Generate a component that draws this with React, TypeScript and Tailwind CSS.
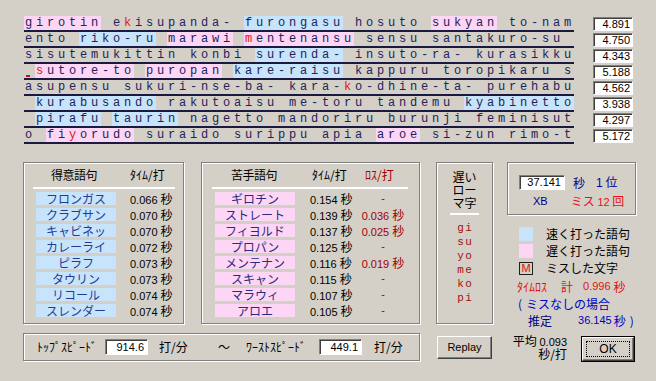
import React from "react"

type Hl = [number, number, "b" | "p"]

interface Line {
  t: string
  hl: Hl[]
  red: number[]
  under?: number
  n: string
}

const LINES: Line[] = [
  { t: "girotin ekisupanda- furongasu hosuto sukyan to-nam", hl: [[0, 7, "p"], [20, 9, "b"], [37, 6, "p"]], red: [9], n: "4.891" },
  { t: "ento riko-ru marawi mentenansu sensu santakuro-su ", hl: [[5, 7, "b"], [13, 6, "p"], [20, 10, "p"]], red: [20], n: "4.750" },
  { t: "sisutemukittin konbi surenda- insuto-ra- kurasikku", hl: [[21, 8, "b"]], red: [], n: "4.343" },
  { t: " sutore-to puropan kare-raisu kappuru toropikaru s", hl: [[1, 9, "p"], [11, 7, "p"], [19, 10, "b"]], red: [1], under: 0, n: "5.188" },
  { t: "asupensu sukuri-nse-ba- kara-ko-dhine-ta- purehabu", hl: [], red: [29], n: "4.562" },
  { t: " kurabusando rakutoaisu me-toru tandemu kyabinetto", hl: [[1, 11, "b"], [40, 10, "b"]], red: [], n: "3.938" },
  { t: " pirafu taurin nagetto mandoriru burunji feminisut", hl: [[1, 6, "b"], [8, 6, "b"]], red: [], n: "4.297" },
  { t: "o fiyorudo suraido surippu apia aroe si-zun rimo-t", hl: [[2, 8, "p"], [32, 4, "p"]], red: [4], n: "5.172" },
]

const FAST = [
  ["フロンガス", "0.066"],
  ["クラブサン", "0.070"],
  ["キャビネッ", "0.070"],
  ["カレーライ", "0.072"],
  ["ピラフ", "0.073"],
  ["タウリン", "0.073"],
  ["リコール", "0.074"],
  ["スレンダー", "0.074"],
]

const SLOW = [
  ["ギロチン", "0.154", ""],
  ["ストレート", "0.139", "0.036"],
  ["フィヨルド", "0.137", "0.025"],
  ["プロパン", "0.125", ""],
  ["メンテナン", "0.116", "0.019"],
  ["スキャン", "0.115", ""],
  ["マラウィ", "0.107", ""],
  ["アロエ", "0.105", ""],
]

const SLOW_KANA = ["gi", "su", "yo", "me", "ko", "pi"]

const jp = "font-['Noto_Sans_CJK_JP',sans-serif]"
const num = "font-['Liberation_Sans','Noto_Sans_CJK_JP',sans-serif]"
const etched = "border border-[#808080] shadow-[inset_1px_1px_0_#ffffff,1px_1px_0_#ffffff]"
const sunken = "border border-t-[#808080] border-l-[#808080] border-r-white border-b-white shadow-[inset_1px_1px_0_#404040] bg-white"

function cellBg(line: Line, i: number) {
  for (const [s, len, c] of line.hl) {
    if (i >= s && i < s + len) return c === "b" ? "bg-[#c8e4fb]" : "bg-[#fcd6f4]"
  }
  return ""
}

function RomajiLine({ line }: { line: Line }) {
  return (
    <div className="flex items-start h-[16px]">
      <div className="w-[550px] flex flex-col">
        <div className="flex h-[14px]">
          {line.t.split("").map((ch, i) => (
            <span
              key={i}
              className={`relative w-[11px] h-[14px] leading-[14px] pl-[1px] text-[12px] ${cellBg(line, i)} ${line.red.includes(i) ? "text-[#e01818]" : "text-[#22225a]"}`}
            >
              {ch === " " ? "\u00a0" : ch}
              {line.under === i && <span className="absolute left-[2px] bottom-[1px] w-[4px] h-[2px] bg-[#d01010]" />}
            </span>
          ))}
        </div>
        <div className="h-[2px] bg-[#1a1a40]" />
      </div>
      <div className={`ml-[19px] mt-[1px] w-[40px] h-[14px] ${sunken} text-right pr-[2px] text-[11px] leading-[12px] text-black ${num}`}>
        {line.n}
      </div>
    </div>
  )
}

function FastPanel() {
  return (
    <div className={`w-[161px] h-[162px] ${etched}`}>
      <div className={`flex h-[24px] items-center text-[12px] text-black ${jp}`}>
        <span className="w-[100px] text-center tracking-[-0.5px]">得意語句</span>
        <span className="ml-[6px] text-[12px]">ﾀｲﾑ/打</span>
      </div>
      <div className="ml-[9px] w-[142px] h-[2px] bg-white" />
      <div className="mt-[3px] flex flex-col">
        {FAST.map(([w, t]) => (
          <div key={w} className="flex h-[16px] items-start">
            <div className={`ml-[12px] w-[80px] h-[13px] bg-[#c8e4fb] text-center leading-[13px] text-[12px] text-[#1e3c96] ${jp}`}>{w}</div>
            <div className={`ml-[14px] whitespace-nowrap leading-[13px] text-[11px] text-black ${num}`}>
              {t} <span className={`text-[12px] ${jp}`}>秒</span>
            </div>
          </div>
        ))}
      </div>
    </div>
  )
}

function SlowPanel() {
  return (
    <div className={`w-[219px] h-[162px] ${etched}`}>
      <div className={`flex h-[24px] items-center text-[12px] text-black ${jp}`}>
        <span className="w-[104px] text-center tracking-[-0.5px]">苦手語句</span>
        <span className="ml-[6px] w-[53px]">ﾀｲﾑ/打</span>
        <span className="text-[#a00000]">ﾛｽ/打</span>
      </div>
      <div className="ml-[10px] w-[196px] h-[2px] bg-white" />
      <div className="mt-[3px] flex flex-col">
        {SLOW.map(([w, t, l]) => (
          <div key={w} className="flex h-[16px] items-start">
            <div className={`ml-[13px] w-[80px] h-[13px] bg-[#fcd6f4] text-center leading-[13px] text-[12px] text-[#2a2a80] ${jp}`}>{w}</div>
            <div className={`ml-[15px] w-[49px] whitespace-nowrap leading-[13px] text-[11px] text-black ${num}`}>
              {t} <span className={`text-[12px] ${jp}`}>秒</span>
            </div>
            <div className={`w-[48px] whitespace-nowrap text-center leading-[13px] text-[11px] text-[#a00000] ${num}`}>
              {l ? (
                <>
                  {l} <span className={`text-[12px] ${jp}`}>秒</span>
                </>
              ) : (
                "-"
              )}
            </div>
          </div>
        ))}
      </div>
    </div>
  )
}

function KanaPanel() {
  return (
    <div className={`w-[57px] h-[162px] ${etched} flex flex-col items-center`}>
      <div className={`pt-[7px] text-[12px] text-black text-center ${jp}`}>
        <div className="h-[13px] leading-[13px]">遅い</div>
        <div className="h-[13px] leading-[13px]">ロー</div>
        <div className="h-[13px] leading-[13px]">マ字</div>
      </div>
      <div className="mt-[4px] w-[29px] h-[2px] bg-white" />
      <div className="mt-[6px] flex flex-col items-center">
        {SLOW_KANA.map((k) => (
          <div key={k} className="h-[14px] leading-[14px] text-[11px] tracking-[1.5px] pl-[1.5px] text-[#a01010] font-['Liberation_Mono',monospace]">
            {k}
          </div>
        ))}
      </div>
    </div>
  )
}

function ScorePanel() {
  return (
    <div className={`w-[129px] h-[53px] ${etched} flex flex-col ${jp}`}>
      <div className="flex items-center mt-[12px] h-[15px]">
        <div className={`ml-[11px] w-[46px] h-[15px] ${sunken} text-right pr-[3px] text-[11px] leading-[13px] text-black ${num}`}>37.141</div>
        <span className="ml-[8px] text-[12px] text-[#000080]">秒</span>
        <span className={`ml-[11px] text-[12px] text-[#0000a0]`}>
          <span className={num}>1</span> 位
        </span>
      </div>
      <div className="flex items-center mt-[4px] h-[15px]">
        <span className={`ml-[25px] text-[11px] text-[#000080] ${num}`}>XB</span>
        <span className="ml-[23px] text-[12px] text-[#e81010]">
          ミス <span className={`text-[11px] ${num}`}>12</span> 回
        </span>
      </div>
    </div>
  )
}

function Legend() {
  return (
    <div className={`mt-[12px] flex flex-col whitespace-nowrap ${jp} text-[12px]`}>
      <div className="flex h-[17px] items-start">
        <div className="ml-[12px] w-[14px] h-[14px] bg-[#c8e4fb]" />
        <span className="ml-[13px] leading-[14px] text-black">速く打った語句</span>
      </div>
      <div className="flex h-[17px] items-start">
        <div className="ml-[12px] w-[14px] h-[14px] bg-[#fcd6f4]" />
        <span className="ml-[13px] leading-[14px] text-black">遅く打った語句</span>
      </div>
      <div className="flex h-[17px] items-start">
        <div className={`ml-[12px] mt-[1px] w-[14px] h-[13px] border border-[#202020] text-[#e01010] text-[11px] leading-[11px] text-center ${num}`}>M</div>
        <span className="ml-[13px] leading-[14px] text-black">ミスした文字</span>
      </div>
      <div className="flex h-[17px] items-center text-[#e01010]">
        <span className="ml-[10px]">ﾀｲﾑﾛｽ</span>
        <span className="ml-[14px]">計</span>
        <span className={`ml-[10px] text-[11px] ${num}`}>0.996</span>
        <span className="ml-[3px]">秒</span>
      </div>
      <div className="flex h-[17px] items-center text-[#0000c0]">
        <span className="ml-[11px]">(</span>
        <span className="ml-[4px]">ミスなしの場合</span>
      </div>
      <div className="flex h-[17px] items-center">
        <span className="ml-[21px] text-[#000080]">推定</span>
        <span className={`ml-[26px] text-[11px] text-[#0000c0] ${num}`}>36.145</span>
        <span className="ml-[2px] text-[#0000c0]">秒</span>
        <span className="ml-[4px] text-[#0000c0]">)</span>
      </div>
    </div>
  )
}

function SpeedBox() {
  return (
    <div className={`mt-[9px] h-[28px] ${etched} flex items-center pl-[13px] text-[12px] text-black whitespace-nowrap ${jp}`}>
      <span className="w-[68px]">ﾄｯﾌﾟｽﾋﾟｰﾄﾞ</span>
      <div className={`w-[43px] h-[16px] ${sunken} text-right pr-[3px] text-[11px] leading-[14px] ${num}`}>914.6</div>
      <span className="ml-[11px] w-[59px]">打/分</span>
      <span className="w-[28px]">～</span>
      <span className="w-[73px]">ﾜｰｽﾄｽﾋﾟｰﾄﾞ</span>
      <div className={`w-[43px] h-[16px] ${sunken} text-right pr-[3px] text-[11px] leading-[14px] ${num}`}>449.1</div>
      <span className="ml-[12px]">打/分</span>
    </div>
  )
}

export default function App() {
  return (
    <div className={`w-[656px] h-[381px] bg-[#d4d0c8] overflow-hidden select-none ${jp}`}>
      <div className="pt-[16px] pl-[24px] flex flex-col font-['Liberation_Mono',monospace]">
        {LINES.map((l, i) => (
          <RomajiLine key={i} line={l} />
        ))}
      </div>

      <div className="flex pl-[23px] mt-[18px]">
        <div className="flex flex-col w-[397px]">
          <div className="flex gap-[17px]">
            <FastPanel />
            <SlowPanel />
          </div>
          <SpeedBox />
        </div>

        <div className="ml-[16px] flex flex-col w-[57px]">
          <KanaPanel />
          <button className={`mt-[12px] ml-[1px] w-[55px] h-[23px] bg-[#d4d0c8] border border-t-white border-l-white border-r-[#404040] border-b-[#404040] shadow-[inset_-1px_-1px_0_#808080] text-[11px] text-black ${num}`}>
            Replay
          </button>
        </div>

        <div className="ml-[14px] flex flex-col w-[129px]">
          <ScorePanel />
          <Legend />
          <div className="flex items-start mt-[4px]">
            <div className={`ml-[4px] mt-[1px] w-[56px] whitespace-nowrap text-right text-[12px] text-black ${jp}`}>
              <div className="h-[13px] leading-[13px]">
                平均 <span className={`text-[11px] leading-[13px] ${num}`}>0.093</span>
              </div>
              <div className="h-[13px] leading-[13px]">秒/打</div>
            </div>
            <button className="ml-[14px] mt-[3px] w-[54px] h-[26px] border border-black bg-[#d4d0c8] p-0">
              <div className="w-full h-full border border-t-white border-l-white border-r-[#404040] border-b-[#404040] shadow-[inset_-1px_-1px_0_#808080] flex items-center justify-center p-[3px]">
                <div className={`w-full h-full border border-dotted border-black flex items-center justify-center text-[12px] text-black ${num}`}>
                  OK
                </div>
              </div>
            </button>
          </div>
        </div>
      </div>
    </div>
  )
}
